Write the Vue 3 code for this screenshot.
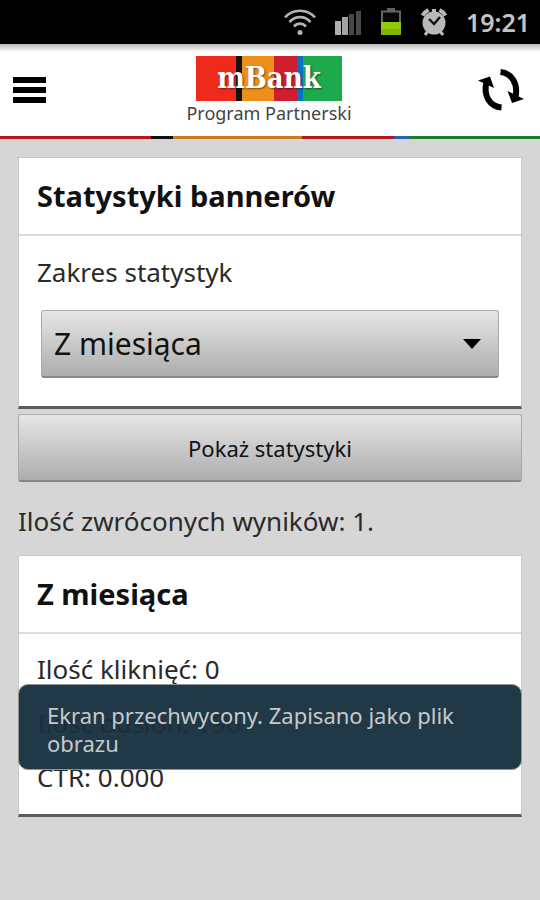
<template>
  <div class="page">
    <div class="status">
      <svg class="status__wifi" viewBox="1 0 32 28" width="32" height="28">
        <g fill="none" stroke="#b4b4b4" stroke-width="2.6">
          <path d="M2 9.5C10 .5 24 .5 32 9.5" />
          <path d="M6.500 14C12.500 7.500 21.500 7.500 27.500 14" />
          <path d="M11 18.500c3.500-3.800 8.500-3.800 12 0" />
        </g>
        <circle cx="17" cy="24.500" r="2.500" fill="#b4b4b4" />
      </svg>
      <svg class="status__signal" viewBox="0 0 28 28" width="28" height="28">
        <path d="M1 13h6v14H1z" fill="#b0b0b0" />
        <path d="M8 9h6v18H8z" fill="#a4a4a4" />
        <path d="M15 6h5v21h-5zM22 3h5v24h-5z" fill="#484848" />
      </svg>
      <svg class="status__battery" viewBox="0 0 22 28" width="22" height="28">
        <path d="M7 0h8v3H7z" fill="#606060" />
        <path d="M2 3.500h18V15H2z" fill="#080808" stroke="#666" stroke-width="2" />
        <path d="M1 14h20v11.500a1.500 1.500 0 0 1-1.500 1.500h-17A1.500 1.500 0 0 1 1 25.500z" fill="#93c908" />
        <path d="M1 21h20v6H1z" fill="#75a800" opacity=".6" />
      </svg>
      <svg class="status__alarm" viewBox="0 0 28 28" width="28" height="28">
        <path d="M8 23l-3 4M20 23l3 4" stroke="#b9b9b9" stroke-width="3" />
        <circle cx="14" cy="15" r="11.500" fill="#b9b9b9" />
        <path d="M2.500 7.500A15 15 0 0 1 8.500 2M25.500 7.500A15 15 0 0 0 19.500 2" fill="none" stroke="#b9b9b9" stroke-width="4" />
        <path d="M12 1h4v4h-4z" fill="#b9b9b9" />
        <path d="M9 11l5 5 6-7" fill="none" stroke="#111" stroke-width="2.400" />
      </svg>
      <span class="status__time">19:21</span>
    </div>

    <header class="header">
      <button class="icon-btn" aria-label="Menu">
        <svg viewBox="0 0 34 28" width="34" height="28">
          <path d="M1 1h33v6H1zM1 11h33v6H1zM1 21h33v6H1z" />
        </svg>
      </button>
      <a href="#" class="logo">
        <span class="logo__name">mBank</span>
        <span class="logo__sub">Program Partnerski</span>
      </a>
      <button class="icon-btn" aria-label="Odśwież">
        <svg viewBox="0 0 46 44" width="46" height="44">
          <g fill="none" stroke="#000" stroke-width="6">
            <path d="M22.500 4C33 5 40.500 15 37.500 29" />
            <path d="M23.500 39.500C12 38.500 5 28 8.500 14" />
          </g>
          <path d="M29.500 23L34 35l12-4zM16 20L12 8.500 0 12.500z" />
        </svg>
      </button>
    </header>
    <div class="stripe"></div>

    <main class="content">
      <form @submit.prevent="showStats">
        <section class="card">
          <h2 class="card__title">Statystyki bannerów</h2>
          <div class="card__body">
            <label for="range" class="label">Zakres statystyk</label>
            <div class="select">
              <select id="range" v-model="range" class="select__input">
                <option v-for="item in ranges" :key="item">{{ item }}</option>
              </select>
              <svg class="select__arrow" viewBox="0 0 18 10" width="18" height="10">
                <path d="M0 0h18L9 10z" />
              </svg>
            </div>
          </div>
        </section>
        <button type="submit" class="submit">Pokaż statystyki</button>
      </form>

      <p class="count">Ilość zwróconych wyników: {{ results.length }}.</p>

      <section v-for="result in results" :key="result.name" class="card">
        <h2 class="card__title">{{ result.name }}</h2>
        <div class="card__rows">
          <div v-for="row in result.rows" :key="row.label" class="row">
            {{ row.label }}: {{ row.value }}
          </div>
        </div>
      </section>
    </main>

    <div class="toast" role="status">Ekran przechwycony. Zapisano jako plik obrazu</div>
  </div>
</template>

<script setup>
  import {ref} from 'vue';

  const ranges = ['Z miesiąca'];
  const range = ref(ranges[0]);

  const getResults = (name) => [
    {
      name,
      rows: [
        {label: 'Ilość kliknięć', value: '0'},
        {label: 'Ilość odsłon', value: '196'},
        {label: 'CTR', value: '0.000'},
      ],
    },
  ];

  const results = ref(getResults(range.value));

  const showStats = () => {
    results.value = getResults(range.value);
  };
</script>

<style>
  body {
    margin: 0;
    background-color: #d6d6d6;
  }
</style>

<style scoped>
  .page {
    position: relative;
    min-height: 100vh;
    background-color: #d6d6d6;
    color: #2a2a2a;
    font-family: "Noto Sans", "Open Sans", sans-serif;
    font-size: 26px;
  }

  .status {
    display: flex;
    align-items: center;
    justify-content: flex-end;
    gap: 18px;
    height: 44px;
    padding: 0 10px;
    background-color: #000;
  }

  .status__time {
    color: #c4c4c4;
    font-size: 25px;
    font-weight: 600;
    line-height: 44px;
  }

  .header {
    display: flex;
    align-items: center;
    justify-content: space-between;
    height: 92px;
    padding: 0 14px 0 12px;
    box-sizing: border-box;
    background: linear-gradient(#b8b8b8, #fff 8px);
  }

  .icon-btn {
    display: flex;
    justify-content: flex-start;
    width: 48px;
    padding: 0;
    border: 0;
    background: none;
    cursor: pointer;
  }

  .logo {
    display: flex;
    flex-direction: column;
    align-items: center;
    color: #444;
    text-decoration: none;
  }

  .logo__name {
    width: 146px;
    height: 45px;
    background: linear-gradient(
      90deg,
      #ee2a1c 40px,
      #111 40px 46px,
      #ee8f1c 46px 78px,
      #ce1f2c 78px 101px,
      #0a72c4 101px 107px,
      #1caa4c 107px
    );
    color: #fff;
    font-family: "DejaVu Serif Condensed", "DejaVu Serif", serif;
    font-size: 29px;
    font-weight: bold;
    line-height: 45px;
    text-align: center;
    text-shadow: 1px 1px 2px rgba(0, 0, 0, 0.5);
  }

  .logo__sub {
    font-size: 18px;
    line-height: 24px;
    white-space: nowrap;
  }

  .stripe {
    height: 3px;
    background: linear-gradient(
      90deg,
      #b8181c 28%,
      #111 28% 32%,
      #cc7a20 32% 56%,
      #b01820 56% 73%,
      #2a62b0 73% 76%,
      #1c7c2c 76%
    );
  }

  .content {
    padding: 18px;
  }

  .card {
    border: 1px solid #c8c8c8;
    border-bottom: 3px solid #5c5c5c;
    background-color: #fff;
  }

  .card__title {
    margin: 0;
    padding: 18px;
    border-bottom: 2px solid #dcdcdc;
    color: #111;
    font-size: 29px;
    font-weight: bold;
    line-height: 40px;
  }

  .card__body {
    padding: 18px 22px 28px;
  }

  .label {
    display: block;
    margin: 0 -4px 20px;
    line-height: 36px;
  }

  .select {
    display: flex;
    position: relative;
    align-items: center;
  }

  .select__input,
  .submit {
    display: block;
    width: 100%;
    height: 68px;
    border: 1px solid #aaa;
    border-bottom: 2px solid #888;
    border-radius: 3px;
    background: linear-gradient(#e6e6e6, #adadad);
    color: #111;
    font-family: inherit;
  }

  .select__input {
    appearance: none;
    padding: 0 12px;
    font-size: 30px;
  }

  .select__arrow {
    position: absolute;
    right: 18px;
    pointer-events: none;
  }

  .submit {
    margin-top: 5px;
    font-size: 22px;
    cursor: pointer;
  }

  .count {
    margin: 20px 0 15px;
    line-height: 38px;
  }

  .card__rows {
    padding: 8px 18px 10px;
  }

  .row {
    line-height: 54px;
  }

  .toast {
    position: absolute;
    right: 18px;
    bottom: 130px;
    left: 18px;
    padding: 16px 28px 12px;
    border: 1px solid #8d9599;
    border-radius: 10px;
    background-color: rgba(24, 48, 62, 0.96);
    color: #c6cacc;
    font-size: 22px;
    line-height: 28px;
  }
</style>
